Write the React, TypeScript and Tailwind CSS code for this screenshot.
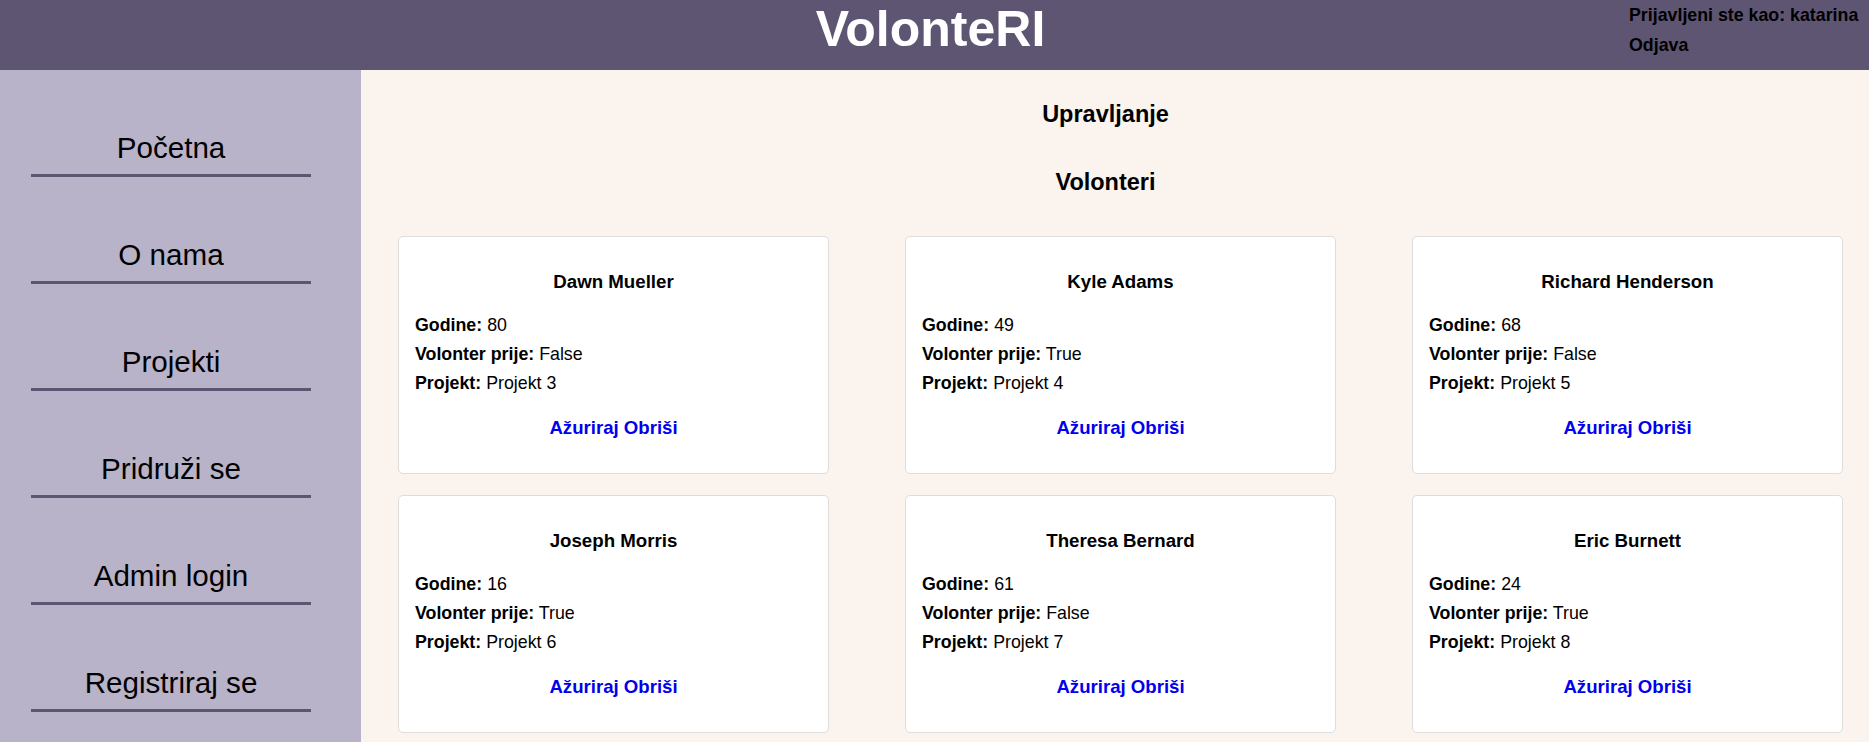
const navItems = ['Početna', 'O nama', 'Projekti', 'Pridruži se', 'Admin login', 'Registriraj se'];

interface Volunteer {
  name: string;
  age: number;
  before: boolean;
  project: string;
}

const volunteers: Volunteer[] = [
  { name: 'Dawn Mueller', age: 80, before: false, project: 'Projekt 3' },
  { name: 'Kyle Adams', age: 49, before: true, project: 'Projekt 4' },
  { name: 'Richard Henderson', age: 68, before: false, project: 'Projekt 5' },
  { name: 'Joseph Morris', age: 16, before: true, project: 'Projekt 6' },
  { name: 'Theresa Bernard', age: 61, before: false, project: 'Projekt 7' },
  { name: 'Eric Burnett', age: 24, before: true, project: 'Projekt 8' },
];

function VolunteerCard({ v }: { v: Volunteer }) {
  return (
    <div className="bg-white border border-[#dddddd] rounded-[5px] px-[16px] pt-[34px] pb-[34px]">
      <h3 className="text-center font-bold text-[18.7px] leading-[22px] text-black">{v.name}</h3>
      <div className="mt-[18px] text-[17.8px] leading-[29px] text-black">
        <p>
          <b>Godine:</b> {v.age}
        </p>
        <p>
          <b>Volonter prije:</b> {v.before ? 'True' : 'False'}
        </p>
        <p>
          <b>Projekt:</b> {v.project}
        </p>
      </div>
      <div className="mt-[19px] text-center font-bold text-[18.6px] leading-[22px] text-[#0000ee]">
        <a href="#">Ažuriraj</a> <a href="#">Obriši</a>
      </div>
    </div>
  );
}

export default function App() {
  return (
    <div className="min-h-screen flex flex-col font-['Liberation_Sans',Arial,sans-serif] bg-[#faf3ee]">
      <header className="h-[70px] shrink-0 bg-[#5d5572] grid grid-cols-[1fr_auto_1fr] pr-[8px]">
        <div />
        <h1 className="pt-[1px] text-[50px] leading-[57px] font-bold text-white">VolonteRI</h1>
        <div className="justify-self-end w-[232px] whitespace-nowrap text-[17.8px] leading-[30px] font-bold text-black">
          <p>Prijavljeni ste kao: katarina</p>
          <a href="#" className="block">Odjava</a>
        </div>
      </header>

      <div className="flex flex-1">
        <aside className="w-[361px] shrink-0 bg-[#b8b3c8]">
          {navItems.map((item) => (
            <a
              key={item}
              href="#"
              className="block w-[280px] ml-[31px] pt-[61px] pb-[10px] border-b-[3px] border-[#5d5572] text-center text-[29.6px] leading-[33px] text-black"
            >
              {item}
            </a>
          ))}
        </aside>

        <main className="flex-1 pl-[37px] pt-[31px] pb-[12px]">
          <div className="pr-[56px] text-center font-bold text-[23.5px] leading-[27px] text-black">
            <h2>Upravljanje</h2>
            <h2 className="mt-[41px]">Volonteri</h2>
          </div>
          <div className="mt-[40px] grid grid-cols-[431px_431px_431px] gap-x-[76px] gap-y-[21px]">
            {volunteers.map((v) => (
              <VolunteerCard key={v.name} v={v} />
            ))}
          </div>
        </main>
      </div>
    </div>
  );
}
